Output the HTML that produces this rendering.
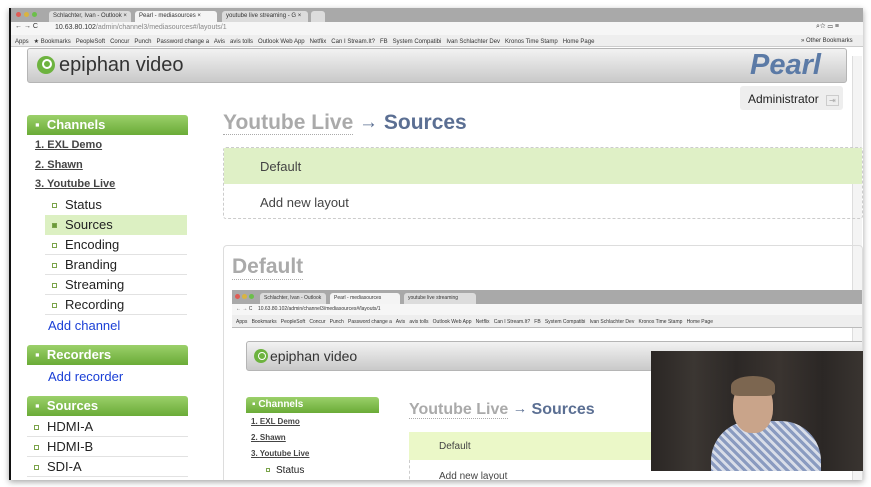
<!DOCTYPE html>
<html><head><meta charset="utf-8"><style>
*{margin:0;padding:0;box-sizing:border-box}
body{width:871px;height:487px;background:#fff;position:relative;overflow:hidden;font-family:"Liberation Sans",sans-serif}
.a{position:absolute}
.win{left:9px;top:8px;width:854px;height:472px;background:#fff;border-left:2px solid #111;box-shadow:0 2px 6px rgba(0,0,0,.35);overflow:hidden}
.tabs{background:#a9a9a9}
.tab{background:#dcdcdc;border-radius:3px 3px 0 0;font-size:6px;color:#333;padding:2px 4px;height:11px;white-space:nowrap}
.bm{font-size:6px;color:#333;white-space:nowrap}
.banner{background:linear-gradient(#f2f2f2,#c9c9c9);border:1px solid #b5b5b5;border-radius:3px}
.gh{background:linear-gradient(#9bd06a,#6aab37);border-radius:3px 3px 0 0;color:#fff;font-weight:bold}
.lk{color:#444;font-weight:bold;text-decoration:underline;font-size:11px}
.sub{font-size:13px;color:#222;border-bottom:1px solid #e2e2e2;height:20px;line-height:20px;padding-left:20px;width:142px}
.sq{display:inline-block;width:5px;height:5px;border:1px solid #7aa34a;position:absolute;left:7px;top:8px}
.blue{color:#1a3fd6;font-size:13px}
.arr{font-weight:normal;font-size:0.9em;vertical-align:1px}
</style></head><body>
<div class="a win">
 <div class="a tabs" style="left:0;top:0;width:854px;height:14px">
  <div class="a" style="left:5px;top:4px;width:5px;height:5px;border-radius:50%;background:#e05c55"></div>
  <div class="a" style="left:13px;top:4px;width:5px;height:5px;border-radius:50%;background:#d9b440"></div>
  <div class="a" style="left:21px;top:4px;width:5px;height:5px;border-radius:50%;background:#6bbf4a"></div>
  <div class="a tab" style="left:38px;top:3px;width:82px">Schlachter, Ivan - Outlook ×</div>
  <div class="a tab" style="left:124px;top:3px;width:82px;background:#f4f4f4">Pearl - mediasources ×</div>
  <div class="a tab" style="left:211px;top:3px;width:86px">youtube live streaming - G ×</div>
  <div class="a tab" style="left:300px;top:3px;width:14px"></div>
 </div>
 <div class="a" style="left:0;top:14px;width:854px;height:13px;background:#f6f6f6;font-size:7px;color:#333">
  <span class="a" style="left:4px;top:1px">← → C</span>
  <span class="a" style="left:44px;top:2px">10.63.80.102<span style="color:#888">/admin/channel3/mediasources#/layouts/1</span></span>
  <span class="a" style="left:805px;top:1px">⌕☆ ▭ ≡</span>
 </div>
 <div class="a bm" style="left:0;top:27px;width:854px;height:12px;background:#eee;border-bottom:1px solid #ccc;padding:3px 4px">Apps &nbsp; ★ Bookmarks &nbsp; PeopleSoft &nbsp; Concur &nbsp; Punch &nbsp; Password change a &nbsp; Avis &nbsp; avis tolls &nbsp; Outlook Web App &nbsp; Netflix &nbsp; Can I Stream.It? &nbsp; FB &nbsp; System Compatibi &nbsp; Ivan Schlachter Dev &nbsp; Kronos Time Stamp &nbsp; Home Page<span style="position:absolute;left:790px">» Other Bookmarks</span></div>
 <div class="a banner" style="left:16px;top:40px;width:820px;height:35px">
  <div class="a" style="left:9px;top:7px;width:18px;height:18px;border-radius:50%;background:#6db33f"></div>
  <div class="a" style="left:14px;top:10px;width:10px;height:10px;border-radius:50%;border:2px solid #fff"></div>
  <div class="a" style="left:31px;top:5px;font-size:20px;color:#333">epiphan video</div>
  <div class="a" style="left:722px;top:0px;font-size:29px;color:#5b7aa6;font-weight:bold;font-style:italic">Pearl</div>
 </div>
 <div class="a" style="left:841px;top:48px;width:10px;height:424px;background:#f4f4f4;border-left:1px solid #ddd"></div>
 <div class="a" style="left:729px;top:78px;width:103px;height:24px;background:#eee;border-radius:3px;font-size:12px;color:#222;padding:6px 8px;white-space:nowrap">Administrator <span style="color:#aaa;border:1px solid #ccc;font-size:8px;padding:0 2px;margin-left:4px">⇥</span></div>

 <div class="a gh" style="left:16px;top:107px;width:161px;height:20px;font-size:13px;line-height:20px;padding-left:8px">▪ &nbsp;Channels</div>
 <div class="a lk" style="left:24px;top:131px">1. <u>EXL Demo</u></div>
 <div class="a lk" style="left:24px;top:151px">2. <u>Shawn</u></div>
 <div class="a lk" style="left:24px;top:170px">3. <u>Youtube Live</u></div>
 <div class="a" style="left:34px;top:187px">
  <div class="sub" style="position:relative;border:none"><span class="sq"></span>Status</div>
  <div class="sub" style="position:relative;background:#dcf0c2;border:none"><span class="sq" style="background:#6a9a3a"></span>Sources</div>
  <div class="sub" style="position:relative"><span class="sq"></span>Encoding</div>
  <div class="sub" style="position:relative"><span class="sq"></span>Branding</div>
  <div class="sub" style="position:relative"><span class="sq"></span>Streaming</div>
  <div class="sub" style="position:relative"><span class="sq"></span>Recording</div>
 </div>
 <div class="a blue" style="left:37px;top:310px">Add channel</div>
 <div class="a gh" style="left:16px;top:337px;width:161px;height:20px;font-size:13px;line-height:20px;padding-left:8px">▪ &nbsp;Recorders</div>
 <div class="a blue" style="left:37px;top:361px">Add recorder</div>
 <div class="a gh" style="left:16px;top:388px;width:161px;height:20px;font-size:13px;line-height:20px;padding-left:8px">▪ &nbsp;Sources</div>
 <div class="a" style="left:16px;top:409px">
  <div class="sub" style="position:relative;width:161px"><span class="sq"></span>HDMI-A</div>
  <div class="sub" style="position:relative;width:161px"><span class="sq"></span>HDMI-B</div>
  <div class="sub" style="position:relative;width:161px"><span class="sq"></span>SDI-A</div>
 </div>

 <div class="a" style="left:212px;top:103px;font-size:21px;font-weight:bold;color:#5b6f93;white-space:nowrap"><span style="color:#aaa;border-bottom:1px dotted #aaa">Youtube Live</span> <span class="arr">→</span> Sources</div>
 <div class="a" style="left:212px;top:139px;width:640px;height:72px;border:1px dashed #ccc;border-radius:3px">
  <div style="height:36px;background:#dff0c6;font-size:13px;color:#444;padding:11px 0 0 36px">Default</div>
  <div style="font-size:13px;color:#444;padding:11px 0 0 36px">Add new layout</div>
 </div>
 <div class="a" style="left:212px;top:237px;width:640px;height:240px;border:1px solid #ddd;border-radius:4px;overflow:hidden">
  <div class="a" style="left:8px;top:9px;font-size:21px;font-weight:bold;color:#aaa;border-bottom:1px dotted #aaa">Default</div>
  <div class="a" style="left:8px;top:44px;width:640px;height:14px;background:#a9a9a9">
   <div class="a" style="left:3px;top:4px;width:5px;height:5px;border-radius:50%;background:#e05c55"></div>
   <div class="a" style="left:10px;top:4px;width:5px;height:5px;border-radius:50%;background:#d9b440"></div>
   <div class="a" style="left:17px;top:4px;width:5px;height:5px;border-radius:50%;background:#6bbf4a"></div>
   <div class="a tab" style="left:28px;top:3px;width:66px;font-size:5px">Schlachter, Ivan - Outlook</div>
   <div class="a tab" style="left:98px;top:3px;width:70px;font-size:5px;background:#f4f4f4">Pearl - mediasources</div>
   <div class="a tab" style="left:172px;top:3px;width:72px;font-size:5px">youtube live streaming</div>
  </div>
  <div class="a" style="left:8px;top:58px;width:640px;height:11px;background:#f6f6f6;font-size:5px;color:#333;padding:2px 4px">← → C &nbsp;&nbsp; 10.63.80.102/admin/channel3/mediasources#/layouts/1</div>
  <div class="a bm" style="left:8px;top:69px;width:640px;height:13px;background:#eee;border-bottom:1px solid #bbb;font-size:5px;padding:4px 4px">Apps &nbsp; Bookmarks &nbsp; PeopleSoft &nbsp; Concur &nbsp; Punch &nbsp; Password change a &nbsp; Avis &nbsp; avis tolls &nbsp; Outlook Web App &nbsp; Netflix &nbsp; Can I Stream.It? &nbsp; FB &nbsp; System Compatibi &nbsp; Ivan Schlachter Dev &nbsp; Kronos Time Stamp &nbsp; Home Page</div>
  <div class="a banner" style="left:22px;top:95px;width:630px;height:30px">
   <div class="a" style="left:7px;top:7px;width:14px;height:14px;border-radius:50%;background:#6db33f"></div>
   <div class="a" style="left:11px;top:10px;width:8px;height:8px;border-radius:50%;border:1.5px solid #fff"></div>
   <div class="a" style="left:23px;top:6px;font-size:14px;color:#333">epiphan video</div>
  </div>
  <div class="a gh" style="left:22px;top:151px;width:133px;height:16px;font-size:10px;line-height:16px;padding-left:6px">▪ Channels</div>
  <div class="a lk" style="left:27px;top:171px;font-size:8px">1. <u>EXL Demo</u></div>
  <div class="a lk" style="left:27px;top:187px;font-size:8px">2. <u>Shawn</u></div>
  <div class="a lk" style="left:27px;top:203px;font-size:8px">3. <u>Youtube Live</u></div>
  <div class="a" style="left:42px;top:219px;font-size:10px;color:#222"><span style="display:inline-block;width:4px;height:4px;border:1px solid #7aa34a;margin-right:6px;vertical-align:1px"></span>Status</div>
  <div class="a" style="left:185px;top:155px;font-size:16px;font-weight:bold;color:#5b6f93;white-space:nowrap"><span style="color:#aaa;border-bottom:1px dotted #aaa">Youtube Live</span> <span class="arr">→</span> Sources</div>
  <div class="a" style="left:185px;top:186px;width:460px;height:28px;background:#ebf8c8;font-size:10px;color:#444;padding:9px 0 0 30px">Default</div>
  <div class="a" style="left:185px;top:214px;width:1px;height:30px;border-left:1px dashed #ccc"></div>
  <div class="a" style="left:215px;top:225px;font-size:10px;color:#444">Add new layout</div>
 </div>
 <div class="a" style="left:640px;top:343px;width:214px;height:120px;background:linear-gradient(90deg,#2a2624,#3b3632 20%,#2c2826 40%,#3a3430 60%,#2b2725 80%,#3a3531);overflow:hidden">
  <div class="a" style="left:60px;top:70px;width:110px;height:60px;border-radius:40px 40px 0 0;background:repeating-linear-gradient(45deg,#8a9bc0 0 3px,#d8dde8 3px 6px)"></div>
  <div class="a" style="left:82px;top:30px;width:40px;height:52px;border-radius:45%;background:#c9a48a"></div>
  <div class="a" style="left:80px;top:25px;width:44px;height:20px;border-radius:50% 50% 20% 20%;background:#7c6650"></div>
 </div>
</div>
</body></html>
